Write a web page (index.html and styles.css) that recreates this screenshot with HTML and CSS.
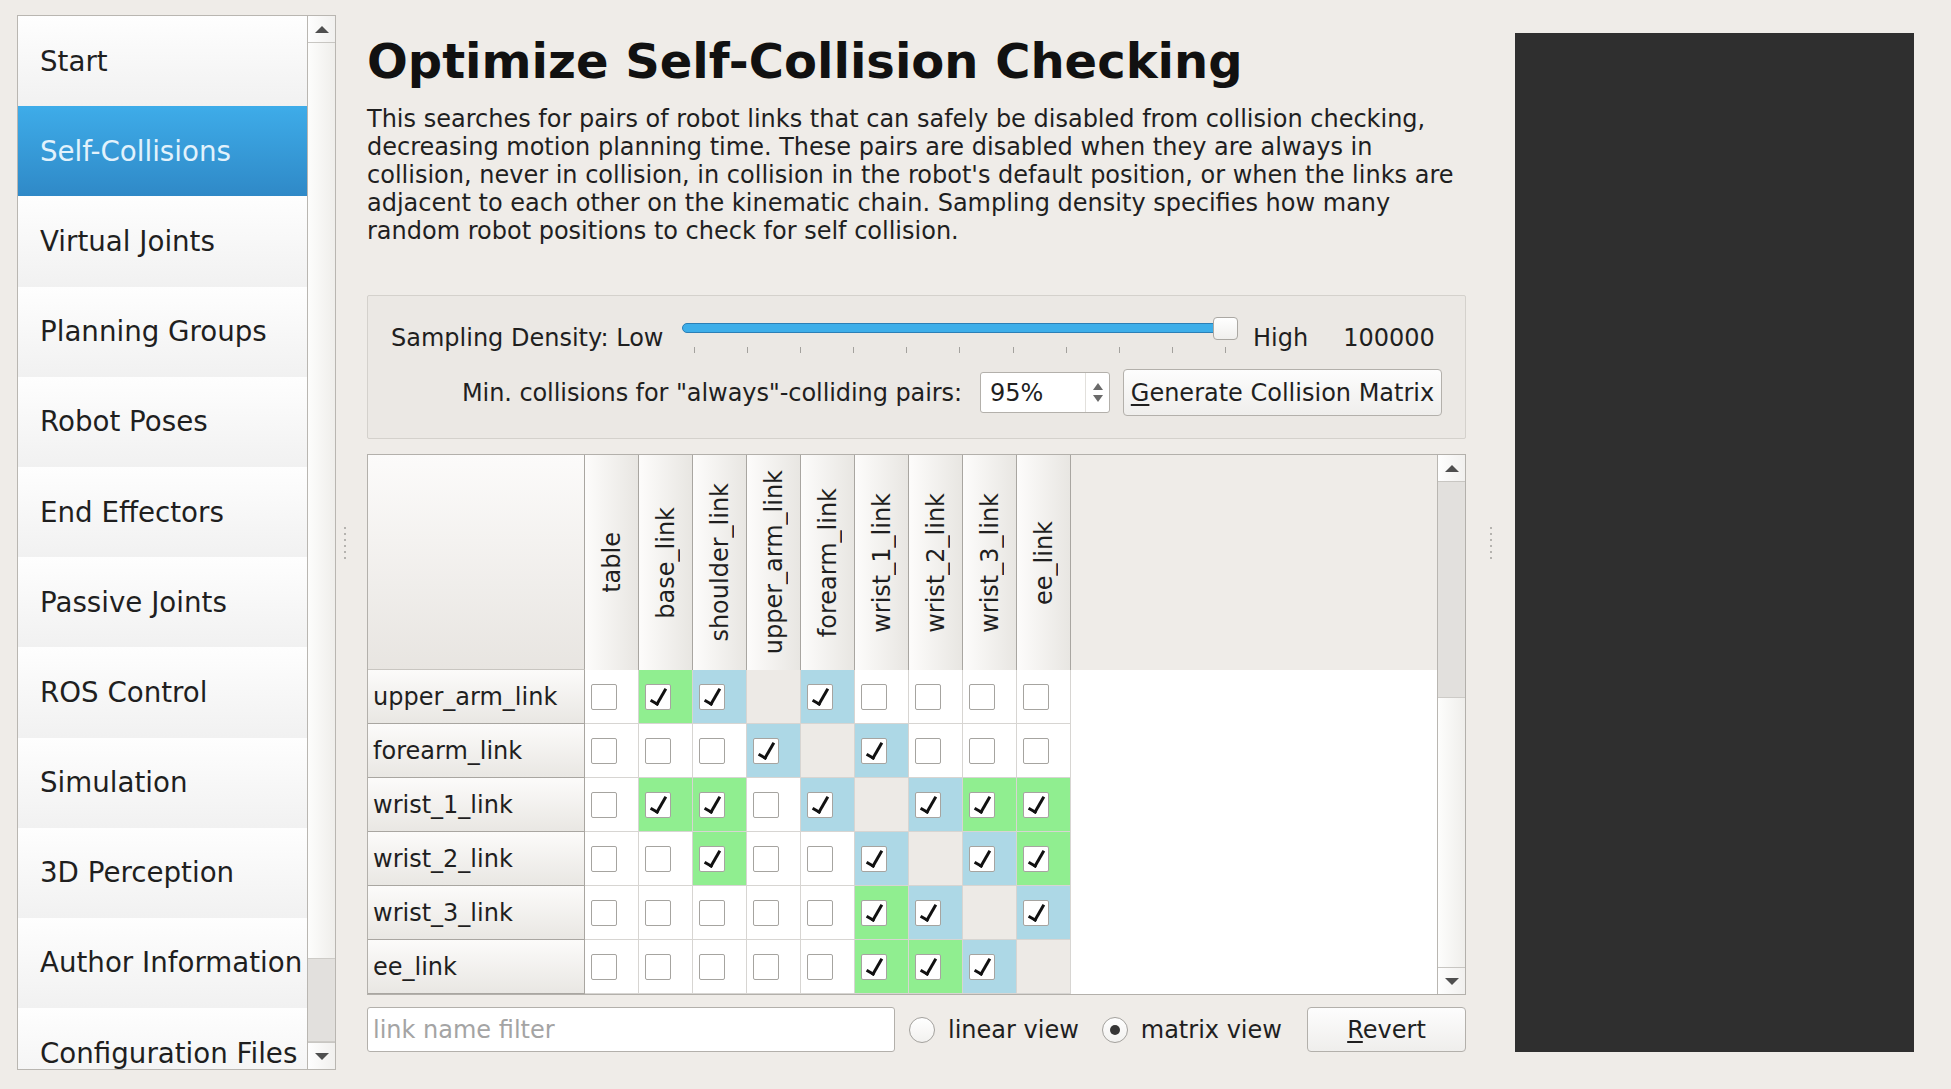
FILE: index.html
```html
<!DOCTYPE html>
<html>
<head>
<meta charset="utf-8">
<title>MoveIt Setup Assistant - Self-Collisions</title>
<link rel="stylesheet" href="styles.css">
</head>
<body>
<div class="window">
  <nav class="sidebar">
    <ul class="steps">
      <li class="step">Start</li>
      <li class="step active">Self-Collisions</li>
      <li class="step">Virtual Joints</li>
      <li class="step">Planning Groups</li>
      <li class="step">Robot Poses</li>
      <li class="step">End Effectors</li>
      <li class="step">Passive Joints</li>
      <li class="step">ROS Control</li>
      <li class="step">Simulation</li>
      <li class="step">3D Perception</li>
      <li class="step">Author Information</li>
      <li class="step">Configuration Files</li>
    </ul>
    <div class="vscroll">
      <div class="sb-btn up"><span class="arrow-up"></span></div>
      <div class="sb-space"></div>
      <div class="sb-handle side-handle"></div>
      <div class="sb-btn down"><span class="arrow-down"></span></div>
    </div>
  </nav>

  <div class="splitter left"><span class="grip"><i></i><i></i><i></i><i></i><i></i><i></i></span></div>

  <main class="main">
    <h1 class="title">Optimize Self-Collision Checking</h1>
    <p class="desc">This searches for pairs of robot links that can safely be disabled from collision checking,<br>decreasing motion planning time. These pairs are disabled when they are always in<br>collision, never in collision, in collision in the robot's default position, or when the links are<br>adjacent to each other on the kinematic chain. Sampling density specifies how many<br>random robot positions to check for self collision.</p>

    <section class="group">
      <div class="row density">
        <span class="dlabel">Sampling Density: Low</span>
        <div class="slider">
          <div class="groove"></div>
          <div class="ticks"><i></i><i></i><i></i><i></i><i></i><i></i><i></i><i></i><i></i><i></i><i></i></div>
          <div class="handle"></div>
        </div>
        <span class="high">High</span>
        <span class="value">100000</span>
      </div>
      <div class="row minc">
        <span class="mlabel">Min. collisions for "always"-colliding pairs:</span>
        <div class="spinbox">
          <span class="spin-text">95%</span>
          <span class="spin-arrows"><span class="arrow-up small"></span><span class="arrow-down small"></span></span>
        </div>
        <button class="btn gen"><u>G</u>enerate Collision Matrix</button>
      </div>
    </section>

    <section class="matrix">
      <div class="mview">
        <div class="hdr">
          <div class="corner"></div>
          <div class="colh"><span>table</span></div>
          <div class="colh"><span>base_link</span></div>
          <div class="colh"><span>shoulder_link</span></div>
          <div class="colh"><span>upper_arm_link</span></div>
          <div class="colh"><span>forearm_link</span></div>
          <div class="colh"><span>wrist_1_link</span></div>
          <div class="colh"><span>wrist_2_link</span></div>
          <div class="colh"><span>wrist_3_link</span></div>
          <div class="colh"><span>ee_link</span></div>
        </div>
        <div class="drow">
          <div class="rowh">upper_arm_link</div>
          <div class="cell"><span class="cb"></span></div>
          <div class="cell g"><span class="cb on"></span></div>
          <div class="cell b"><span class="cb on"></span></div>
          <div class="cell d"></div>
          <div class="cell b"><span class="cb on"></span></div>
          <div class="cell"><span class="cb"></span></div>
          <div class="cell"><span class="cb"></span></div>
          <div class="cell"><span class="cb"></span></div>
          <div class="cell"><span class="cb"></span></div>
        </div>
        <div class="drow">
          <div class="rowh">forearm_link</div>
          <div class="cell"><span class="cb"></span></div>
          <div class="cell"><span class="cb"></span></div>
          <div class="cell"><span class="cb"></span></div>
          <div class="cell b"><span class="cb on"></span></div>
          <div class="cell d"></div>
          <div class="cell b"><span class="cb on"></span></div>
          <div class="cell"><span class="cb"></span></div>
          <div class="cell"><span class="cb"></span></div>
          <div class="cell"><span class="cb"></span></div>
        </div>
        <div class="drow">
          <div class="rowh">wrist_1_link</div>
          <div class="cell"><span class="cb"></span></div>
          <div class="cell g"><span class="cb on"></span></div>
          <div class="cell g"><span class="cb on"></span></div>
          <div class="cell"><span class="cb"></span></div>
          <div class="cell b"><span class="cb on"></span></div>
          <div class="cell d"></div>
          <div class="cell b"><span class="cb on"></span></div>
          <div class="cell g"><span class="cb on"></span></div>
          <div class="cell g"><span class="cb on"></span></div>
        </div>
        <div class="drow">
          <div class="rowh">wrist_2_link</div>
          <div class="cell"><span class="cb"></span></div>
          <div class="cell"><span class="cb"></span></div>
          <div class="cell g"><span class="cb on"></span></div>
          <div class="cell"><span class="cb"></span></div>
          <div class="cell"><span class="cb"></span></div>
          <div class="cell b"><span class="cb on"></span></div>
          <div class="cell d"></div>
          <div class="cell b"><span class="cb on"></span></div>
          <div class="cell g"><span class="cb on"></span></div>
        </div>
        <div class="drow">
          <div class="rowh">wrist_3_link</div>
          <div class="cell"><span class="cb"></span></div>
          <div class="cell"><span class="cb"></span></div>
          <div class="cell"><span class="cb"></span></div>
          <div class="cell"><span class="cb"></span></div>
          <div class="cell"><span class="cb"></span></div>
          <div class="cell g"><span class="cb on"></span></div>
          <div class="cell b"><span class="cb on"></span></div>
          <div class="cell d"></div>
          <div class="cell b"><span class="cb on"></span></div>
        </div>
        <div class="drow">
          <div class="rowh">ee_link</div>
          <div class="cell"><span class="cb"></span></div>
          <div class="cell"><span class="cb"></span></div>
          <div class="cell"><span class="cb"></span></div>
          <div class="cell"><span class="cb"></span></div>
          <div class="cell"><span class="cb"></span></div>
          <div class="cell g"><span class="cb on"></span></div>
          <div class="cell g"><span class="cb on"></span></div>
          <div class="cell b"><span class="cb on"></span></div>
          <div class="cell d"></div>
        </div>
      </div>
      <div class="vscroll">
        <div class="sb-btn up"><span class="arrow-up"></span></div>
        <div class="sb-handle table-handle"></div>
        <div class="sb-space"></div>
        <div class="sb-btn down"><span class="arrow-down"></span></div>
      </div>
    </section>

    <div class="bottom">
      <input class="filter" type="text" placeholder="link name filter">
      <label class="radio first"><span class="rb"></span>linear view</label>
      <label class="radio second"><span class="rb on"></span>matrix view</label>
      <button class="btn revert"><u>R</u>evert</button>
    </div>
  </main>

  <div class="splitter right"><span class="grip"><i></i><i></i><i></i><i></i><i></i><i></i></span></div>

  <div class="viewer"></div>
</div>
</body>
</html>
```

FILE: styles.css
```css
* { box-sizing: border-box; }
html, body { margin: 0; padding: 0; }
body {
  width: 1951px;
  height: 1089px;
  overflow: hidden;
  background: #efece8;
  font-family: "DejaVu Sans", "Noto Sans", sans-serif;
  color: #1f1f1f;
}

.window {
  display: flex;
  align-items: flex-start;
  padding: 15px 0 0 17px;
  height: 1089px;
}

/* ---------- sidebar ---------- */
.sidebar {
  flex: none;
  width: 319px;
  height: 1055px;
  border: 1px solid #b9b6b1;
  display: flex;
  background: #fff;
}
.steps {
  list-style: none;
  margin: 0;
  padding: 0;
  width: 289px;
  height: 100%;
  overflow: hidden;
}
.step {
  height: 90.2px;
  display: flex;
  align-items: center;
  padding-left: 22px;
  font-size: 27.7px;
  white-space: nowrap;
  background: linear-gradient(#fefefe, #f1f1f1);
  color: #1f1f1f;
}
.step.active {
  background: linear-gradient(#3eace9, #2f89c7);
  color: #e2f2fc;
}

/* ---------- scrollbars ---------- */
.vscroll {
  flex: none;
  width: 28px;
  border-left: 1px solid #b9b6b1;
  display: flex;
  flex-direction: column;
  background: linear-gradient(to right, #fdfdfc, #efeeeb);
}
.sb-btn {
  flex: none;
  height: 27px;
  display: flex;
  align-items: center;
  justify-content: center;
  background: linear-gradient(to right, #fefefe, #f1f0ee);
}
.sb-btn.up { border-bottom: 1px solid #c8c6c2; }
.sb-btn.down { border-top: 1px solid #c8c6c2; }
.sb-space { flex: 1; }
.sb-handle {
  flex: none;
  background: #e2e0dd;
  border-top: 1px solid #cdcbc7;
  border-bottom: 1px solid #cdcbc7;
}
.side-handle { height: 84px; }
.table-handle { height: 216px; border-top: none; }

.arrow-up, .arrow-down {
  display: block;
  width: 0;
  height: 0;
  border-left: 7px solid transparent;
  border-right: 7px solid transparent;
}
.arrow-up { border-bottom: 7px solid #4f4f4f; }
.arrow-down { border-top: 7px solid #4f4f4f; }

/* ---------- splitters ---------- */
.splitter {
  flex: none;
  height: 1055px;
  display: flex;
  align-items: center;
}
.splitter.left { width: 31px; padding-left: 8px; }
.splitter.right { width: 49px; padding-left: 24px; }
.grip { display: flex; flex-direction: column; gap: 4px; }
.grip i { display: block; width: 2px; height: 2px; background: #b5b3af; }

/* ---------- main ---------- */
.main {
  flex: none;
  width: 1099px;
  display: flex;
  flex-direction: column;
}
.title {
  margin: 29px 0 0;
  font-size: 48px;
  line-height: 35px;
  font-weight: bold;
  color: #111;
  white-space: nowrap;
}
.desc {
  margin: 26px 0 0;
  font-size: 24px;
  line-height: 28px;
  white-space: nowrap;
  color: #1f1f1f;
}

/* group box */
.group {
  margin-top: 50px;
  height: 144px;
  border: 1px solid #d4d1cc;
  border-radius: 2px;
  background: #ebe8e4;
  padding: 18px 23px 0 23px;
  display: flex;
  flex-direction: column;
  gap: 8px;
}
.row {
  height: 47px;
  display: flex;
  align-items: center;
  font-size: 24px;
  white-space: nowrap;
}
.dlabel { width: 291px; flex: none; }
.slider {
  position: relative;
  flex: none;
  width: 556px;
  height: 38px;
  margin-top: -3px;
}
.groove {
  position: absolute;
  left: 0;
  right: 12px;
  top: 6px;
  height: 10px;
  border-radius: 5px;
  background: #3daee9;
  border: 1px solid #2b7fb6;
}
.ticks {
  position: absolute;
  left: 12px;
  right: 12px;
  top: 30px;
  height: 6px;
  display: flex;
  justify-content: space-between;
}
.ticks i { display: block; width: 1px; height: 6px; background: #a3a19d; }
.handle {
  position: absolute;
  right: 0;
  top: 0;
  width: 25px;
  height: 23px;
  border-radius: 4px;
  border: 1px solid #aba8a3;
  background: linear-gradient(#ffffff, #f0efed);
}
.high { margin-left: 15px; }
.value { margin-left: 35px; }

.minc { justify-content: flex-end; }
.mlabel { margin-right: 18px; letter-spacing: -0.08px; }
.spinbox {
  width: 130px;
  height: 41px;
  border: 1px solid #b3b0ab;
  border-radius: 3px;
  background: #fff;
  display: flex;
  align-items: center;
}
.spin-text { flex: 1; padding-left: 9px; }
.spin-arrows {
  width: 24px;
  height: 100%;
  display: flex;
  flex-direction: column;
  align-items: center;
  justify-content: center;
  gap: 5px;
  border-left: 1px solid #e2e0dc;
}
.arrow-up.small { border-left-width: 5px; border-right-width: 5px; border-bottom: 7px solid #6a6a6a; }
.arrow-down.small { border-left-width: 5px; border-right-width: 5px; border-top: 7px solid #6a6a6a; }

.btn {
  font-family: "DejaVu Sans", "Noto Sans", sans-serif;
  font-size: 24px;
  color: #1f1f1f;
  border: 1px solid #b3b0ab;
  border-radius: 4px;
  background: linear-gradient(#fdfdfd, #efeeec);
  padding: 0;
  white-space: nowrap;
}
.btn u { text-decoration-thickness: 2px; text-underline-offset: 3px; }
.gen { margin-left: 13px; width: 319px; height: 47px; }

/* matrix */
.matrix {
  margin-top: 15px;
  height: 541px;
  border: 1px solid #b3b0ab;
  background: #fff;
  display: flex;
}
.mview {
  flex: 1;
  display: flex;
  flex-direction: column;
  overflow: hidden;
}
.hdr {
  flex: none;
  height: 215px;
  display: flex;
  background: #efece8;
}
.corner {
  flex: none;
  width: 217px;
  border-right: 1px solid #a9a6a1;
  border-bottom: 1px solid #c9c6c1;
  background: linear-gradient(#fcfbfa, #e8e5e1);
}
.colh {
  flex: none;
  width: 54px;
  border-right: 1px solid #a9a6a1;
  background: linear-gradient(to right, #fdfcfb, #e8e6e2);
  display: flex;
  align-items: center;
  justify-content: center;
}
.colh span {
  writing-mode: vertical-rl;
  transform: rotate(180deg);
  font-size: 24px;
  white-space: nowrap;
}
.drow {
  flex: none;
  height: 54px;
  display: flex;
}
.rowh {
  flex: none;
  width: 217px;
  border-right: 1px solid #a9a6a1;
  border-bottom: 1px solid #a9a6a1;
  background: linear-gradient(#fcfbfa, #e9e7e3);
  font-size: 24px;
  padding-left: 5px;
  display: flex;
  align-items: center;
  white-space: nowrap;
}
.cell {
  flex: none;
  width: 54px;
  border-right: 1px solid #d7d5d2;
  border-bottom: 1px solid #d7d5d2;
  display: flex;
  align-items: center;
  padding-left: 6px;
  background: #fff;
}
.cell.g { background: #90ee90; }
.cell.b { background: #add8e6; }
.cell.d { background: #edeae6; }
.cb {
  position: relative;
  display: block;
  width: 26px;
  height: 26px;
  border: 1px solid #a6a4a0;
  border-radius: 2px;
  background: #fff;
}
.cb.on::after {
  content: "";
  position: absolute;
  left: 8px;
  top: 1px;
  width: 6px;
  height: 16px;
  border-right: 3px solid #111;
  border-bottom: 3px solid #111;
  transform: rotate(30deg);
}

/* bottom row */
.bottom {
  margin-top: 12px;
  height: 45px;
  display: flex;
  align-items: center;
  font-size: 24px;
}
.filter {
  width: 528px;
  height: 45px;
  border: 1px solid #b3b0ab;
  border-radius: 3px;
  background: #fff;
  font-family: "DejaVu Sans", "Noto Sans", sans-serif;
  font-size: 24px;
  padding: 0 0 0 5px;
  color: #1f1f1f;
  outline: none;
}
.filter::placeholder { color: #a4a4a4; }
.radio {
  display: flex;
  align-items: center;
  gap: 13px;
  white-space: nowrap;
}
.radio.first { margin-left: 14px; }
.radio.second { margin-left: 23px; }
.rb {
  width: 26px;
  height: 26px;
  border-radius: 50%;
  border: 1px solid #a3a19d;
  background: linear-gradient(#ffffff, #f2f1ef);
  display: flex;
  align-items: center;
  justify-content: center;
}
.rb.on::after {
  content: "";
  width: 10px;
  height: 10px;
  border-radius: 50%;
  background: #363636;
}
.revert { margin-left: auto; width: 159px; height: 45px; }

/* 3D viewer */
.viewer {
  flex: none;
  width: 399px;
  height: 1019px;
  margin-top: 18px;
  background: #2f2f2f;
}
```
